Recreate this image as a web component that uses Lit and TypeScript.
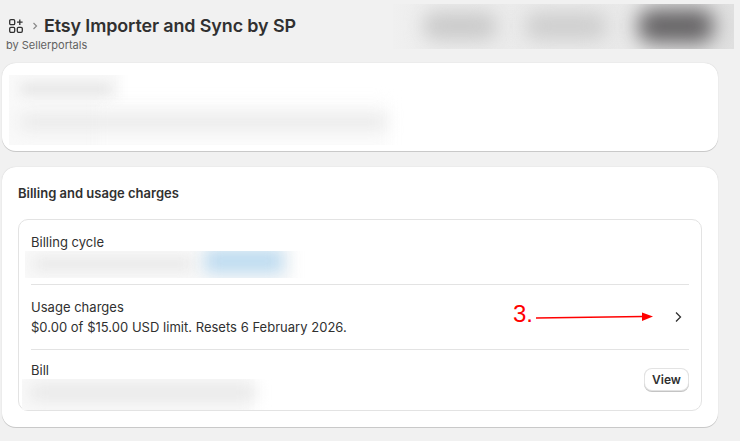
import { LitElement, html, css } from "lit";
import { customElement } from "lit/decorators.js";

@customElement("app-root")
export class AppRoot extends LitElement {
  static styles = css`
    :host { display: block; width: 740px; height: 441px; overflow: hidden; background: #f1f1f1; font-family: Inter, "Liberation Sans", sans-serif; color: #303030; position: relative; }
    * { box-sizing: border-box; }
    .page { display: flex; flex-direction: column; padding: 4px 22px 0 2px; }
    .header { display: flex; justify-content: space-between; height: 59px; }
    .titles { padding: 10px 0 0 4px; }
    .crumb { display: flex; align-items: center; height: 24px; }
    .crumb svg.apps { margin: 0 0 0 2px; }
    .crumb svg.sep { margin: 0 5px 0 7px; }
    h1 { margin: 0; font-size: 17.9px; line-height: 24px; font-weight: 600; letter-spacing: -0.1px; color: #303030; }
    .by { font-size: 11px; line-height: 14px; color: #616161; }
    .actions { width: 341px; height: 45px; margin-right: -16px; overflow: hidden; position: relative; flex: none; background: linear-gradient(90deg, #f0f0f0, #ececec 12%, #e9e9e9 70%, #e0e0e0 100%); }
    .actions i { position: absolute; display: block; border-radius: 14px; }
    .a1 { left: 30px; top: 8px; width: 74px; height: 28px; background: #cbcbcb; filter: blur(9px); }
    .a2 { left: 132px; top: 8px; width: 82px; height: 28px; background: #cfcfcf; filter: blur(9px); }
    .a3 { left: 245px; top: 5px; width: 76px; height: 34px; background: #666466; filter: blur(10px); }
    .card { background: #fff; border-radius: 14px; box-shadow: 0 1px 0 #c9c9c9, 0 0 1px #c0c0c0; }
    .card1 { height: 88px; padding: 12px 0 0 7px; }
    .blur1 { width: 400px; height: 70px; overflow: hidden; position: relative; }
    .blur1 i { position: absolute; display: block; }
    .b0 { left: -12px; top: -12px; width: 125px; height: 100px; background: #f9f9f9; filter: blur(4px); }
    .b3 { left: 90px; top: 25px; width: 290px; height: 60px; background: #fbfbfb; filter: blur(7px); }
    .b1 { left: 12px; top: 8px; width: 90px; height: 12px; background: #e6e6e6; filter: blur(6px); }
    .b2 { left: 12px; top: 41px; width: 365px; height: 12px; background: #e6e6e6; filter: blur(8px); }
    .card2 { margin-top: 16px; height: 260px; padding: 16px; }
    h2 { margin: 0; font-size: 13px; line-height: 20px; font-weight: 600; color: #303030; }
    .box { margin-top: 16px; border: 1px solid #e3e3e3; border-radius: 10px; height: 192px; padding: 0 12px; display: flex; flex-direction: column; }
    .row { position: relative; }
    .row + .row { border-top: 1px solid #e3e3e3; }
    .r1 { height: 64px; padding-top: 13px; }
    .r2 { height: 65px; padding-top: 13px; display: flex; justify-content: space-between; align-items: center; }
    .r3 { flex: 1; padding-top: 11px; }
    .label { font-size: 13px; line-height: 20px; color: #303030; letter-spacing: 0.02px; }
    .r1 .label, .r3 .label { line-height: 18px; }
    .patch { position: relative; overflow: hidden; }
    .patch i { position: absolute; display: block; }
    .p1 { width: 285px; height: 27px; margin: 0 0 0 -6px; }
    .p1 .bg { left: -10px; top: -10px; width: 280px; height: 47px; background: #f9f9f9; filter: blur(6px); }
    .p1 .g { left: 8px; top: 6px; width: 160px; height: 14px; background: #e9e9e9; filter: blur(7px); }
    .p1 .c { left: 180px; top: -2px; width: 78px; height: 24px; background: #bddbf0; filter: blur(8px); }
    .p3 { width: 250px; height: 31px; margin: 0 0 0 -9px; }
    .p3 .bg { left: -10px; top: -10px; width: 240px; height: 51px; background: #f9f9f9; filter: blur(6px); }
    .p3 .g { left: 8px; top: 6px; width: 225px; height: 15px; background: #e6e6e6; filter: blur(8px); }
    .r2 .text { margin-top: -13px; }
    .r2 svg { flex: none; margin: -13px 4px 0 0; }
    .btn { position: absolute; right: 1px; top: 19px; width: 43px; height: 21px; border: 0; border-radius: 7px; background: #fff; font: 600 12px Inter, "Liberation Sans", sans-serif; color: #303030; box-shadow: 0 0 0 1px #e3e3e3, 0 1px 0 1px #c4c4c4; padding: 0; }
    .note { position: absolute; left: 513px; top: 301px; font: 24px/26px "Liberation Sans", sans-serif; color: #f00; }
    .arrow { position: absolute; left: 535px; top: 310px; }
  `;

  render() {
    return html`
      <div class="page">
        <div class="header">
          <div class="titles">
            <div class="crumb">
              <svg class="apps" width="16" height="16" viewBox="0 0 16 16" fill="none" stroke="#303030" stroke-width="1.3">
                <rect x="1.7" y="1.7" width="5" height="5" rx="1.2" />
                <rect x="1.7" y="9.3" width="5" height="5" rx="1.2" />
                <rect x="9.3" y="9.3" width="5" height="5" rx="1.2" />
                <path d="M11.8 1.4v5.6M9 4.2h5.6" />
              </svg>
              <svg class="sep" width="8" height="10" viewBox="0 0 8 10" fill="none" stroke="#8a8a8a" stroke-width="1.2"><path d="M2.5 2l3 3-3 3" /></svg>
              <h1>Etsy Importer and Sync by SP</h1>
            </div>
            <div class="by">by Sellerportals</div>
          </div>
          <div class="actions"><i class="a1"></i><i class="a2"></i><i class="a3"></i></div>
        </div>
        <section class="card card1">
          <div class="blur1"><i class="b0"></i><i class="b3"></i><i class="b1"></i><i class="b2"></i></div>
        </section>
        <section class="card card2">
          <h2>Billing and usage charges</h2>
          <div class="box">
            <div class="row r1">
              <div class="label">Billing cycle</div>
              <div class="patch p1"><i class="bg"></i><i class="g"></i><i class="c"></i></div>
            </div>
            <div class="row r2">
              <div class="text">
                <div class="label">Usage charges</div>
                <div class="label">$0.00 of $15.00 USD limit. Resets 6 February 2026.</div>
              </div>
              <svg width="14" height="14" viewBox="0 0 14 14" fill="none" stroke="#303030" stroke-width="1.3"><path d="M5 2.5l4.5 4.5-4.5 4.5" /></svg>
            </div>
            <div class="row r3">
              <div class="label">Bill</div>
              <div class="patch p3"><i class="bg"></i><i class="g"></i></div>
              <button class="btn">View</button>
            </div>
          </div>
        </section>
      </div>
      <div class="note">3.</div>
      <svg class="arrow" width="120" height="14" viewBox="0 0 120 14">
        <path d="M1 8L108 6.5" stroke="#f00" stroke-width="1.6" />
        <path d="M107 2.5L118 6.5 107 11z" fill="#f00" />
      </svg>
    `;
  }
}
